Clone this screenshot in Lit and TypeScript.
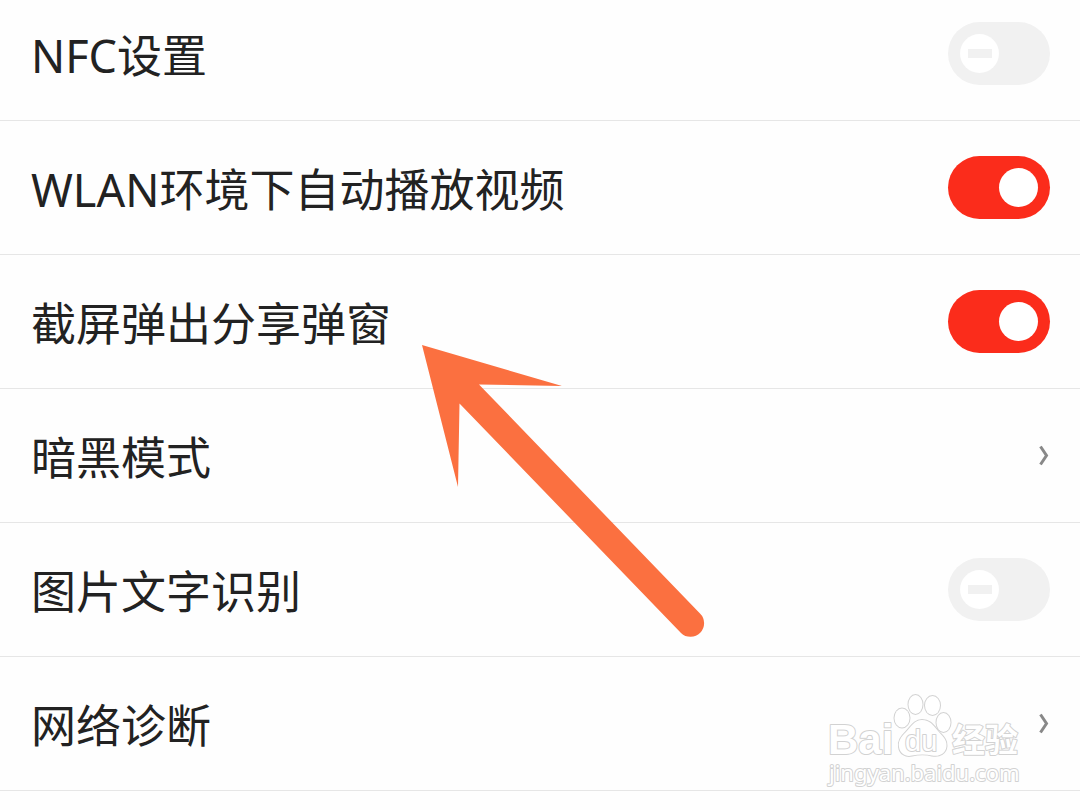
import { LitElement, html, css } from "lit";
import { customElement, property, state } from "lit/decorators.js";

interface Setting {
  id: string;
  label: string;
  kind: "switch" | "link";
  on?: boolean;
}

@customElement("setting-switch")
class SettingSwitch extends LitElement {
  @property() label = "";
  @property({ type: Boolean }) on = false;

  static styles = css`
    :host {
      display: block;
      flex: none;
    }
    .switch {
      appearance: none;
      display: flex;
      align-items: center;
      box-sizing: border-box;
      width: 102px;
      height: 63px;
      margin: 0;
      padding: 0 12px;
      border-radius: 32px;
      background: #f1f1f1;
      cursor: pointer;
    }
    .switch:checked {
      justify-content: flex-end;
      background: #fb2c1b;
    }
    .switch::before {
      content: "";
      width: 39px;
      height: 39px;
      border-radius: 50%;
      background: linear-gradient(#f1f1f1, #f1f1f1) center / 24px 9px no-repeat #fff;
    }
    .switch:checked::before {
      background: #fff;
    }
  `;

  render() {
    return html`<input
      class="switch"
      type="checkbox"
      role="switch"
      aria-label=${this.label}
      .checked=${this.on}
      @change=${(e: Event) => {
        this.on = (e.target as HTMLInputElement).checked;
      }}
    />`;
  }
}

@customElement("app-root")
class AppRoot extends LitElement {
  @state() private settings: Setting[] = [
    { id: "nfc", label: "NFC设置", kind: "switch" },
    { id: "autoplay", label: "WLAN环境下自动播放视频", kind: "switch", on: true },
    { id: "share", label: "截屏弹出分享弹窗", kind: "switch", on: true },
    { id: "dark", label: "暗黑模式", kind: "link" },
    { id: "ocr", label: "图片文字识别", kind: "switch" },
    { id: "network", label: "网络诊断", kind: "link" },
  ];

  static styles = css`
    :host {
      display: block;
      position: relative;
      min-height: 100vh;
      overflow: hidden;
      background: #fefefe;
      color: #222;
      font-family: "Noto Sans", "Noto Sans CJK SC", sans-serif;
    }
    .list {
      margin: 0;
      padding: 0;
      list-style: none;
    }
    .item {
      border-bottom: 1px solid #e6e6e6;
    }
    .row {
      display: flex;
      align-items: center;
      justify-content: space-between;
      min-height: 63px;
      padding: 35px 30px 35px 31px;
      color: inherit;
      text-decoration: none;
    }
    .item:first-child .row {
      padding-top: 22px;
    }
    .label {
      padding-top: 4px;
      font-size: 45px;
      line-height: 56px;
    }
    .chevron {
      flex: none;
      width: 12px;
      height: 24px;
    }
    .pointer {
      position: absolute;
      left: 420px;
      top: 344px;
      width: 286px;
      height: 295px;
      pointer-events: none;
    }
    .watermark {
      position: absolute;
      right: 50px;
      top: 690px;
      width: 210px;
      height: 100px;
      pointer-events: none;
    }
    .mark {
      fill: #fff;
      stroke: #d2d2d2;
      stroke-width: 2px;
      stroke-linejoin: round;
      paint-order: stroke;
    }
    .brand {
      font: bold 42px "Liberation Sans", sans-serif;
    }
    .du {
      font: 29px "Liberation Sans", sans-serif;
    }
    .name {
      font: bold 33px "Noto Sans CJK SC", sans-serif;
    }
    .site {
      font: 22px "Noto Sans", sans-serif;
    }
  `;

  private renderRow(s: Setting) {
    if (s.kind === "link") {
      return html`<a class="row" href="#${s.id}">
        <span class="label">${s.label}</span>
        <svg class="chevron" viewBox="0 0 12 24" aria-hidden="true">
          <path d="M2.500 2.500 8.500 11.500 2.500 20.500" fill="none" stroke="#888" stroke-width="3" />
        </svg>
      </a>`;
    }
    return html`<div class="row">
      <span class="label">${s.label}</span>
      <setting-switch .label=${s.label} .on=${s.on ?? false}></setting-switch>
    </div>`;
  }

  render() {
    return html`
      <ul class="list">
        ${this.settings.map((s) => html`<li class="item">${this.renderRow(s)}</li>`)}
      </ul>
      <svg class="pointer" viewBox="420 344 286 295" aria-hidden="true">
        <path
          fill="#fb7040"
          d="M422 345 562 386 479 384.500 700 613.500A13.500 13.500 0 0 1 681 633L459.500 403.500 458 487Z"
        />
      </svg>
      <svg class="watermark" viewBox="820 690 210 100" aria-hidden="true">
        <text class="mark brand" x="828" y="754">Bai</text>
        <g class="mark">
          <ellipse cx="902" cy="718" rx="7.500" ry="9.500" />
          <ellipse cx="915.500" cy="704.500" rx="7" ry="9.500" />
          <ellipse cx="932.500" cy="705.500" rx="7.500" ry="9.500" />
          <ellipse cx="943.500" cy="722.500" rx="7" ry="9.500" />
          <path
            d="M922 720C914 720 911 727 906 732C901 737 898 741 899 747C900 754 906 757 912 755.500C919 754 926 754 932 755.500C940 757 946 753 946.500 746C947 739 942 736 938 731C933 725 930 720 922 720Z"
          />
        </g>
        <text class="mark du" x="905" y="751">du</text>
        <text class="mark name" x="952" y="752">经验</text>
        <text class="mark site" x="829" y="781">jingyan.baidu.com</text>
      </svg>
    `;
  }
}
